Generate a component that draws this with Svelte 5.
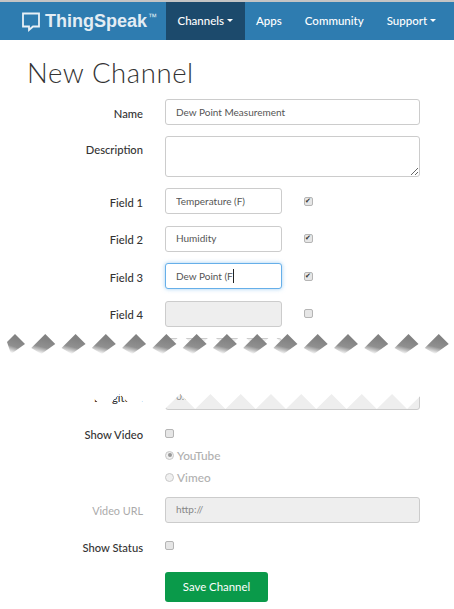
<script>
  const step = 30.27;
  const teeth = Array.from({ length: 15 }, (_, i) => 15 + i * step);
  const topEdge = Array.from({ length: 16 }, (_, i) => `${-15 + i * step},349 ${i * step},334`).join(' ');
  const bottomEdge = Array.from({ length: 16 }, (_, i) => {
    const peak = 452.6 - i * step;
    return `${peak + 15},409 ${peak},394`;
  }).join(' ');
  const fields = [
    { label: 'Field 1', value: 'Temperature (F)', checked: true },
    { label: 'Field 2', value: 'Humidity', checked: true },
    { label: 'Field 3', value: 'Dew Point (F', checked: true, focus: true },
    { label: 'Field 4', value: '', checked: false, disabled: true }
  ];
</script>

<div class="page">
  <nav class="nav">
    <div class="brand">
      <svg class="bubble" width="20" height="20" viewBox="0 0 20 20" aria-hidden="true">
        <path d="M2 1.5H18V14.5H12L8 18V14.5H2Z" fill="none" stroke="#e8f0f6" stroke-width="1.8" />
      </svg>
      <span class="logo">ThingSpeak</span><span class="tm">™</span>
    </div>
    <ul class="menu">
      <li class="active">Channels <i class="caret"></i></li>
      <li>Apps</li>
      <li>Community</li>
      <li>Support <i class="caret"></i></li>
    </ul>
  </nav>

  <main>
    <h1>New Channel</h1>
    <form class="form">
      <div class="row name">
        <label for="name">Name</label>
        <input id="name" class="wide" value="Dew Point Measurement" />
      </div>
      <div class="row top">
        <label for="desc">Description</label>
        <textarea id="desc" class="wide"></textarea>
      </div>
      {#each fields as f}
        <div class="row">
          <label for={f.label}>{f.label}</label>
          <span class="holder">
            <input id={f.label} class="short" class:focus={f.focus} value={f.value} disabled={f.disabled} />
            {#if f.focus}<span class="cursor"></span>{/if}
          </span>
          <input class="box field-box" type="checkbox" checked={f.checked} />
        </div>
      {/each}

      <div class="torn">
        <div class="row">
          <label for="f5">Field 5</label>
          <input id="f5" class="short" disabled />
        </div>
        <div class="row long">
          <label for="lon">Longitude</label>
          <input id="lon" class="wide" disabled value="0.0" />
        </div>
        <svg class="tear" width="454" height="84" viewBox="0 330 454 84" aria-hidden="true">
          <defs>
            <linearGradient id="fade" x1="0.62" y1="0.25" x2="0.4" y2="1">
              <stop offset="0" stop-color="#828282" />
              <stop offset="0.55" stop-color="#909090" />
              <stop offset="1" stop-color="#ffffff" />
            </linearGradient>
          </defs>
          <polygon fill="#fff" points="{topEdge} 480,349 480,409 {bottomEdge} -30,409" />
          {#each teeth as x, i}
            <polygon fill="url(#fade)" points="{x},334 {x + 10},344 {x - 4},354 {i === 0 ? x - 8 : x - 14},{i === 0 ? 342 : 348}" />
          {/each}
        </svg>
      </div>

      <div class="row check-row video">
        <span class="lbl">Show Video</span>
        <input class="box" type="checkbox" />
      </div>
      <div class="row radio-row">
        <span class="lbl"></span>
        <input class="radio" type="radio" name="v" checked disabled />
        <span class="opt">YouTube</span>
      </div>
      <div class="row radio-row">
        <span class="lbl"></span>
        <input class="radio" type="radio" name="v" disabled />
        <span class="opt">Vimeo</span>
      </div>
      <div class="row url">
        <label class="muted" for="url">Video URL</label>
        <input id="url" class="wide" disabled value="http://" />
      </div>
      <div class="row check-row status">
        <span class="lbl">Show Status</span>
        <input class="box" type="checkbox" />
      </div>
      <div class="row save">
        <span class="lbl"></span>
        <button type="button">Save Channel</button>
      </div>
    </form>
  </main>
</div>

<style>
  :global(body) { margin: 0; background: #fff; }
  .page {
    width: 454px;
    height: 609px;
    overflow: hidden;
    font-family: "Lato", "Noto Sans", sans-serif;
    color: #333;
  }
  .nav {
    display: flex;
    height: 38px;
    border-top: 2px solid #c4c4c4;
    background: #2e7cb0;
    color: #fff;
  }
  .brand {
    width: 166px;
    flex: none;
    display: flex;
    align-items: center;
    box-sizing: border-box;
    padding-left: 21px;
    color: #e3edf4;
  }
  .bubble { flex: none; margin-right: 4px; margin-top: 1px; }
  .logo {
    font: bold 18px "Liberation Sans", sans-serif;
  }
  .tm { font: 9px "Liberation Sans", sans-serif; margin: -9px 0 0 1px; }
  .menu {
    display: flex;
    margin: 0;
    padding: 0;
    list-style: none;
    font-size: 11.5px;
    font-weight: 500;
  }
  .menu li { display: flex; align-items: center; padding: 0 11.5px 1px; }
  .menu li.active { background: #1c4a6c; }
  .caret {
    display: inline-block;
    margin-left: 3px;
    border-top: 3px solid #fff;
    border-left: 3px solid transparent;
    border-right: 3px solid transparent;
  }
  h1 {
    margin: 0;
    padding: 17px 0 0 27px;
    height: 42px;
    font-size: 27.5px;
    line-height: 32px;
    font-weight: 300;
    color: #333;
    letter-spacing: 0.6px;
  }
  .form { display: flex; flex-direction: column; }
  .row {
    display: flex;
    align-items: center;
    margin-bottom: 11.5px;
  }
  .row.name { margin-bottom: 11px; }
  .row.top { align-items: flex-start; margin-bottom: 11px; }
  .row.top label { padding-top: 7px; }
  label, .lbl {
    width: 143px;
    margin-right: 22px;
    flex: none;
    text-align: right;
    font-size: 11.2px;
    font-weight: 500;
    color: #333;
    padding-top: 2px;
  }
  input:not(.box):not(.radio), textarea {
    box-sizing: border-box;
    height: 26px;
    margin: 0;
    padding: 0 10px 1px;
    border: 1px solid #ccc;
    border-radius: 3px;
    background: #fff;
    font-family: "Lato", sans-serif;
    font-size: 10px;
    color: #555;
    outline: none;
  }
  .wide { width: 255px; }
  .short { width: 117px; }
  textarea { display: block; height: 41px; resize: both; }
  input:disabled:not(.box):not(.radio) { background: #eee; color: #888; }
  input.focus:not(.box) {
    border-color: #66afe9;
    box-shadow: 0 0 4px rgba(102, 175, 233, 0.6);
  }
  .holder { position: relative; display: block; height: 26px; }
  .cursor {
    position: absolute;
    left: 68px;
    top: 6px;
    width: 1px;
    height: 14px;
    background: #222;
  }
  .box {
    appearance: none;
    position: relative;
    box-sizing: border-box;
    width: 9px;
    height: 9px;
    margin: 0;
    flex: none;
    border: 1px solid #b5b5b5;
    border-radius: 2px;
    background: #e6e6e6;
  }
  .box:checked::after {
    content: "✔";
    position: absolute;
    left: 0;
    top: -2px;
    font: 7px/10px "DejaVu Sans", sans-serif;
    color: #333;
  }
  .field-box { margin-left: 22px; }
  .torn { position: relative; height: 76px; }
  .torn .long { margin-top: 19.5px; }
  .tear { position: absolute; left: 0; top: -8px; display: block; }
  .video { margin-top: 9px; margin-bottom: 0; height: 21px; }
  .video .box { margin-top: -1px; }
  .radio-row { height: 22px; margin-bottom: 0; }
  .radio {
    appearance: none;
    position: relative;
    box-sizing: border-box;
    width: 9px;
    height: 9px;
    margin: 0 3px 0 0;
    flex: none;
    border: 1px solid #c8c8c8;
    border-radius: 50%;
    background: #f0f0f0;
  }
  .radio:checked::after {
    content: "";
    position: absolute;
    left: 1.5px;
    top: 1.5px;
    width: 4px;
    height: 4px;
    border-radius: 50%;
    background: #999;
  }
  .opt { font-size: 11.8px; font-weight: 500; color: #b0b0b0; }
  .url { margin-top: 8.5px; margin-bottom: 0; }
  .muted { color: #aaa; font-size: 10.8px; font-weight: 400; }
  .status { margin-top: 14px; margin-bottom: 0; height: 20px; }
  .status .box { margin-top: -2px; }
  .save { margin-top: 15px; margin-bottom: 0; }
  button {
    width: 103px;
    height: 30px;
    border: 0;
    border-radius: 3px;
    background: #0a9a4a;
    color: #fff;
    font-family: "Lato", sans-serif;
    font-size: 11.4px;
    padding: 0;
  }
</style>
